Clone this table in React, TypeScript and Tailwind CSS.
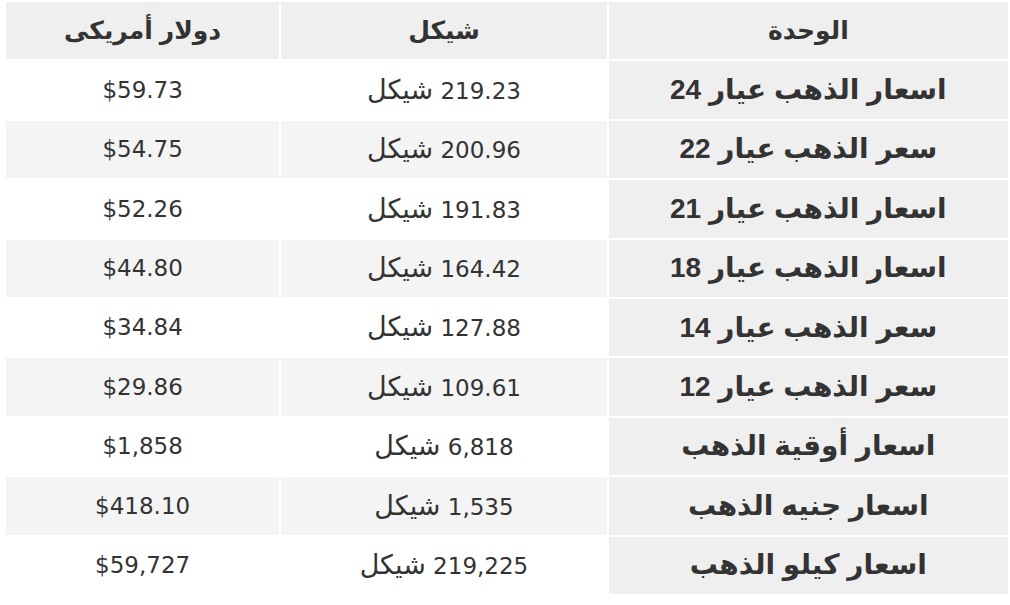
const rows = [
  { unit: "اسعار الذهب عيار 24", ils: "219.23", usd: "$59.73" },
  { unit: "سعر الذهب عيار 22", ils: "200.96", usd: "$54.75" },
  { unit: "اسعار الذهب عيار 21", ils: "191.83", usd: "$52.26" },
  { unit: "اسعار الذهب عيار 18", ils: "164.42", usd: "$44.80" },
  { unit: "سعر الذهب عيار 14", ils: "127.88", usd: "$34.84" },
  { unit: "سعر الذهب عيار 12", ils: "109.61", usd: "$29.86" },
  { unit: "اسعار أوقية الذهب", ils: "6,818", usd: "$1,858" },
  { unit: "اسعار جنيه الذهب", ils: "1,535", usd: "$418.10" },
  { unit: "اسعار كيلو الذهب", ils: "219,225", usd: "$59,727" },
];

export default function App() {
  return (
    <div className="min-h-screen bg-white pl-[4px] text-[#333333]">
      <table
        dir="rtl"
        className="w-[1006px] table-fixed border-separate border-spacing-[2px]"
      >
        <colgroup>
          <col className="w-[399px]" />
          <col className="w-[325px]" />
          <col className="w-[273px]" />
        </colgroup>
        <thead>
          <tr className="h-[57.4px] bg-[#efefef] font-['Liberation_Sans','DejaVu_Sans',sans-serif] text-[25px] font-bold">
            <th className="p-0 text-center">الوحدة</th>
            <th className="p-0 text-center">شيكل</th>
            <th className="p-0 text-center">دولار أمريكى</th>
          </tr>
        </thead>
        <tbody>
          {rows.map((r, i) => (
            <tr
              key={r.unit}
              className={`h-[57.4px] ${i % 2 === 1 ? "bg-[#f4f4f4]" : "bg-white"}`}
            >
              <td className="bg-[#efefef] p-0 text-center font-['Liberation_Sans','DejaVu_Sans',sans-serif] text-[28px] font-bold">
                {r.unit}
              </td>
              <td className="p-0 text-center font-['DejaVu_Sans',sans-serif] text-[23px]">
                {r.ils} <span className="text-[27px]">شيكل</span>
              </td>
              <td className="p-0 text-center font-['DejaVu_Sans',sans-serif] text-[23px]">
                {r.usd}
              </td>
            </tr>
          ))}
        </tbody>
      </table>
    </div>
  );
}
